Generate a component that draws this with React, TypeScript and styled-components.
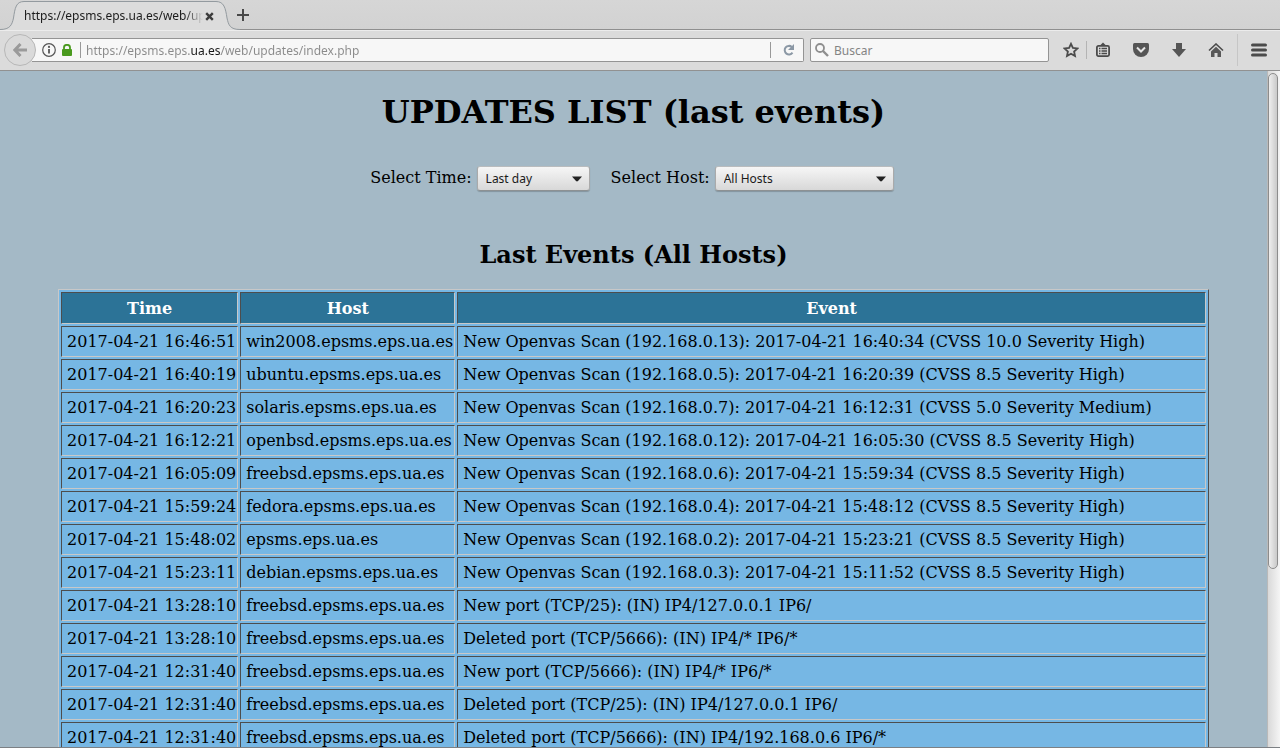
import React from "react";
import styled, { createGlobalStyle } from "styled-components";

const GlobalStyle = createGlobalStyle`
  * { box-sizing: border-box; }
  body { margin: 0; background: #a4b9c6; }
`;

const uiFont = `"Noto Sans", sans-serif`;
const pageFont = `"DejaVu Serif", serif`;

const BrowserWindow = styled.div`
  display: flex;
  flex-direction: column;
  height: 100vh;
  overflow: hidden;
  border-bottom: 1px solid #7c8084;
`;

const TabBar = styled.div`
  display: flex;
  flex: none;
  height: 30px;
  background: linear-gradient(#d6d6d6, #d2d2d2);
  box-shadow: inset 0 -1px #8f8f8f;
`;

const Tab = styled.div`
  display: flex;
  width: 240px;
  margin-right: -3px;
`;

const TabEdge = styled.svg`
  flex: none;
  width: 24px;
  height: 30px;
`;

const TabBody = styled.div`
  display: flex;
  flex: 1;
  align-items: center;
  min-width: 0;
  margin-top: 1px;
  border-top: 1px solid #939a9f;
  background: #dcdcdc;
`;

const TabTitle = styled.span`
  flex: 1;
  overflow: hidden;
  white-space: nowrap;
  font: 12px/16px ${uiFont};
  color: #1c1c1c;
  mask-image: linear-gradient(to left, transparent, #000 18px);
`;

const PlainButton = styled.button<{ $width: number }>`
  display: flex;
  flex: none;
  align-items: center;
  justify-content: center;
  width: ${(p) => p.$width}px;
  padding: 0;
  border: 0;
  background: none;
  color: #4b4b4b;
`;

const Toolbar = styled.div`
  display: flex;
  flex: none;
  align-items: center;
  height: 41px;
  padding: 0 0 1px 4px;
  border-top: 1px solid #ececec;
  border-bottom: 1px solid #919191;
  background: #dbdbdb;
`;

const BackButton = styled.button`
  display: flex;
  flex: none;
  align-items: center;
  justify-content: center;
  width: 32px;
  height: 32px;
  margin-right: -4px;
  padding: 0;
  border: 1px solid #b7b7b7;
  border-radius: 50%;
  background: #dadada;
  z-index: 1;
`;

const Field = styled.div<{ $address?: boolean }>`
  display: flex;
  flex: ${(p) => (p.$address ? "1" : "0 0 239px")};
  align-items: center;
  gap: ${(p) => (p.$address ? "4px" : "5px")};
  height: 24px;
  margin-left: ${(p) => (p.$address ? "0" : "6px")};
  padding-left: ${(p) => (p.$address ? "8px" : "4px")};
  border: 1px solid #949494;
  border-left-width: ${(p) => (p.$address ? "0" : "1px")};
  border-radius: ${(p) => (p.$address ? "0 2px 2px 0" : "2px")};
  background: #f7f7f7;
`;

const FieldInput = styled.input`
  flex: 1;
  min-width: 0;
  height: 20px;
  padding: 0;
  border: 0;
  outline: 0;
  background: transparent;
  font: 12px/16px ${uiFont};
  color: #8a8a8a;
  &::placeholder { color: #848484; opacity: 1; }
`;

const AddressInput = styled(FieldInput)`
  background: linear-gradient(to right, #8a8a8a 104px, #161616 104px, #161616 135px, #8a8a8a 135px);
  background-clip: text;
  -webkit-background-clip: text;
  -webkit-text-fill-color: transparent;
`;

const Divider = styled.span<{ $height: number; $color: string; $spaced?: boolean }>`
  flex: none;
  width: 1px;
  height: ${(p) => p.$height}px;
  margin: ${(p) => (p.$spaced ? "0 1px 0 4px" : "0")};
  background: ${(p) => p.$color};
`;

const Tools = styled.div`
  display: flex;
  flex: none;
  align-items: center;
  margin-left: 7px;
`;

const Viewport = styled.div`
  display: flex;
  flex: 1;
  min-height: 0;
`;

const Page = styled.main`
  flex: 1;
  min-width: 0;
  overflow-y: auto;
  scrollbar-width: none;
  padding: 23px 8px 0;
  background: #a4b9c6;
  font: 16px/19px ${pageFont};
  color: #000;
`;

const Title = styled.h1`
  margin: 0;
  font-size: 32px;
  line-height: 37px;
  text-align: center;
`;

const Subtitle = styled.h2`
  margin: 50px 0 20px;
  font-size: 24px;
  line-height: 28px;
  text-align: center;
`;

const Filters = styled.form`
  display: flex;
  justify-content: center;
  gap: 21px;
  margin-top: 35px;
  padding-right: 3px;
`;

const Filter = styled.label`
  display: flex;
  align-items: center;
  gap: 5px;
`;

const FilterName = styled.span`
  padding-bottom: 2px;
`;

const SelectBox = styled.span<{ $width: number }>`
  display: grid;
  align-items: center;
  width: ${(p) => p.$width}px;
  & > * { grid-area: 1 / 1; }
  & > svg { justify-self: end; margin-right: 8px; pointer-events: none; }
`;

const Select = styled.select`
  appearance: none;
  width: 100%;
  height: 25px;
  padding: 0 8px;
  border: 1px solid #aaa;
  border-top-color: #b9bcbe;
  border-bottom-color: #8d9193;
  border-radius: 3px;
  background: linear-gradient(#f6f6f6, #d8d8d8);
  box-shadow: 0 1px 1px rgba(0, 0, 0, 0.2);
  font: 12px/16px ${uiFont};
  color: #1a1a1a;
`;

const EventTable = styled.table`
  width: 92%;
  margin: 0 auto;
  border: 1px solid;
  border-color: #c8c8c8 #4d4d4d #4d4d4d #c8c8c8;
  border-collapse: separate;
  border-spacing: 2px;
  background: #76b7e4;
`;

const cellBorder = `
  border: 1px solid;
  border-color: #4d4d4d #c8c8c8 #c8c8c8 #4d4d4d;
  white-space: nowrap;
`;

const HeadCell = styled.th<{ $fill?: boolean }>`
  ${cellBorder}
  width: ${(p) => (p.$fill ? "100%" : "auto")};
  padding: 6px 5px 5px;
  background: #2c7397;
  color: #fff;
`;

const Cell = styled.td`
  ${cellBorder}
  padding: 5px 1px 5px 5px;
`;

const ScrollTrack = styled.div`
  flex: none;
  width: 13px;
  padding: 2px 2px 0 0;
  border-left: 1px solid #b9b9b9;
  background: linear-gradient(to right, #d9d9d9, #f5f5f5);
`;

const ScrollThumb = styled.div`
  height: 73.6%;
  border: 1px solid #8c8c8c;
  border-radius: 5px;
  background: linear-gradient(to right, #eee, #c9c9c9);
`;

type Row = [time: string, host: string, event: string];

const scan = (ip: string, at: string, cvss: string) =>
  `New Openvas Scan (192.168.0.${ip}): 2017-04-21 ${at} (CVSS ${cvss})`;

const rows: Row[] = [
  ["16:46:51", "win2008.", scan("13", "16:40:34", "10.0 Severity High")],
  ["16:40:19", "ubuntu.", scan("5", "16:20:39", "8.5 Severity High")],
  ["16:20:23", "solaris.", scan("7", "16:12:31", "5.0 Severity Medium")],
  ["16:12:21", "openbsd.", scan("12", "16:05:30", "8.5 Severity High")],
  ["16:05:09", "freebsd.", scan("6", "15:59:34", "8.5 Severity High")],
  ["15:59:24", "fedora.", scan("4", "15:48:12", "8.5 Severity High")],
  ["15:48:02", "", scan("2", "15:23:21", "8.5 Severity High")],
  ["15:23:11", "debian.", scan("3", "15:11:52", "8.5 Severity High")],
  ["13:28:10", "freebsd.", "New port (TCP/25): (IN) IP4/127.0.0.1 IP6/"],
  ["13:28:10", "freebsd.", "Deleted port (TCP/5666): (IN) IP4/* IP6/*"],
  ["12:31:40", "freebsd.", "New port (TCP/5666): (IN) IP4/* IP6/*"],
  ["12:31:40", "freebsd.", "Deleted port (TCP/25): (IN) IP4/127.0.0.1 IP6/"],
  ["12:31:40", "freebsd.", "Deleted port (TCP/5666): (IN) IP4/192.168.0.6 IP6/*"],
];

const Arrow = () => (
  <svg width="10" height="6" viewBox="0 0 10 6" aria-hidden="true">
    <path d="M0 .5h10L6 5q-1 .8-2 0z" fill="#222" />
  </svg>
);

function Tabs() {
  return (
    <TabBar>
      <Tab>
        <TabEdge viewBox="0 0 24 30" aria-hidden="true">
          <path d="M0 29.500C10 29.500 12 25 13.500 18C15 8 16 1.500 24 1.500V30H0z" fill="#dcdcdc" />
          <path d="M0 29.500C10 29.500 12 25 13.500 18C15 8 16 1.500 24 1.500" fill="none" stroke="#939a9f" />
        </TabEdge>
        <TabBody>
          <TabTitle>https://epsms.eps.ua.es/web/up</TabTitle>
          <PlainButton $width={13} aria-label="Close tab">
            <svg width="9" height="9" viewBox="0 0 9 9">
              <path d="M1.200 1.200l6.600 6.600M7.800 1.200L1.200 7.800" stroke="#3c3c3c" strokeWidth="2.400" />
            </svg>
          </PlainButton>
        </TabBody>
        <TabEdge viewBox="0 0 24 30" aria-hidden="true">
          <path d="M0 1.500C8 1.500 9.500 8 11 18C12.500 25 14 29.500 24 29.500V30H0z" fill="#dcdcdc" />
          <path d="M0 1.500C8 1.500 9.500 8 11 18C12.500 25 14 29.500 24 29.500" fill="none" stroke="#939a9f" />
        </TabEdge>
      </Tab>
      <PlainButton $width={12} aria-label="New tab">
        <svg width="12" height="12" viewBox="0 0 12 12">
          <path d="M6 0v12M0 6h12" stroke="#484848" strokeWidth="2" />
        </svg>
      </PlainButton>
    </TabBar>
  );
}

function NavigationBar() {
  return (
    <Toolbar>
      <BackButton aria-label="Back">
        <svg width="14" height="14" viewBox="0 0 14 14">
          <path d="M7.500 1L1.800 7l5.700 6M2 7h12" fill="none" stroke="#9a9a9a" strokeWidth="3" />
        </svg>
      </BackButton>
      <Field $address>
        <PlainButton $width={18} aria-label="Site information">
          <svg width="14" height="14" viewBox="0 0 14 14">
            <circle cx="7" cy="7" r="6.300" fill="none" stroke="#555" strokeWidth="1.200" />
            <path d="M7 6v4.600" stroke="#555" strokeWidth="1.800" />
            <circle cx="7" cy="3.900" r="1.100" fill="#555" />
          </svg>
        </PlainButton>
        <svg width="10" height="12" viewBox="0 0 10 12" aria-hidden="true">
          <path d="M2 6V3.500a3 2.700 0 0 1 6 0V6" fill="none" stroke="#4a9a1e" strokeWidth="1.800" />
          <rect y="5" width="10" height="7" rx="1" fill="#4a9a1e" />
        </svg>
        <Divider $height={16} $color="#999" $spaced />
        <AddressInput aria-label="Address" defaultValue="https://epsms.eps.ua.es/web/updates/index.php" />
        <Divider $height={16} $color="#999" />
        <PlainButton $width={28} aria-label="Reload">
          <svg width="12" height="12" viewBox="0 0 12 12">
            <path d="M9.500 8.700A4.300 4.300 0 1 1 8.800 2.900" fill="none" stroke="#8b98a5" strokeWidth="2" />
            <path d="M11 0v6H5z" fill="#8b98a5" />
          </svg>
        </PlainButton>
      </Field>
      <Field>
        <svg width="14" height="14" viewBox="0 0 14 14" aria-hidden="true">
          <circle cx="5" cy="5" r="4" fill="none" stroke="#8e8e8e" strokeWidth="1.800" />
          <path d="M8 8l5 5" stroke="#8e8e8e" strokeWidth="2.400" />
        </svg>
        <FieldInput aria-label="Search" placeholder="Buscar" />
      </Field>
      <Tools>
        <PlainButton $width={30} aria-label="Bookmark this page">
          <svg width="16" height="16" viewBox="0 0 16 16">
            <path
              d="M8 1.800l1.900 4.100 4.500.5-3.300 3.100.9 4.500-4-2.300-4 2.300.9-4.500-3.300-3.100 4.500-.5z"
              fill="none"
              stroke="currentColor"
              strokeWidth="1.800"
            />
          </svg>
        </PlainButton>
        <Divider $height={18} $color="#b4b4b4" />
        <PlainButton $width={31} aria-label="Bookmarks">
          <svg width="14" height="16" viewBox="0 0 14 16">
            <path d="M4 3.500L7 .5l3 3z" fill="currentColor" />
            <rect x=".9" y="3.900" width="12.200" height="10.200" rx="1.500" fill="none" stroke="currentColor" strokeWidth="1.800" />
            <path d="M3 6.500h1.500M3 9h1.500M3 11.500h1.500M5.500 6.500H11M5.500 9H11M5.500 11.500H11" stroke="currentColor" strokeWidth="1.300" />
          </svg>
        </PlainButton>
        <PlainButton $width={45} aria-label="Save to Pocket">
          <svg width="16" height="14" viewBox="0 0 16 14">
            <path d="M1.500 0h13Q16 0 16 1.500V6A8 8 0 0 1 0 6V1.500Q0 0 1.500 0z" fill="#555" />
            <path d="M4 4.500l4 4 4-4" fill="none" stroke="#e6e6e6" strokeWidth="2" />
          </svg>
        </PlainButton>
        <PlainButton $width={31} aria-label="Downloads">
          <svg width="14" height="14" viewBox="0 0 14 14">
            <path d="M4 0h6v6h4l-7 8-7-8h4z" fill="#555" />
          </svg>
        </PlainButton>
        <PlainButton $width={43} aria-label="Home">
          <svg width="16" height="14" viewBox="0 0 16 14">
            <path d="M1 7.500L8 1l7 6.500" fill="none" stroke="currentColor" strokeWidth="1.600" />
            <path d="M3 8.400l5-4.700 5 4.700V14H9.500v-4h-3v4H3z" fill="#585858" />
          </svg>
        </PlainButton>
        <Divider $height={32} $color="#c6c6c6" />
        <PlainButton $width={42} aria-label="Menu">
          <svg width="16" height="14" viewBox="0 0 16 14">
            <path d="M1.500 2h13M1.500 7h13M1.500 12h13" stroke="currentColor" strokeWidth="3" strokeLinecap="round" />
          </svg>
        </PlainButton>
      </Tools>
    </Toolbar>
  );
}

export default function App() {
  return (
    <BrowserWindow>
      <GlobalStyle />
      <Tabs />
      <NavigationBar />
      <Viewport>
        <Page>
          <Title>UPDATES LIST (last events)</Title>
          <Filters>
            <Filter>
              <FilterName>Select Time:</FilterName>
              <SelectBox $width={113}>
                <Select><option>Last day</option></Select>
                <Arrow />
              </SelectBox>
            </Filter>
            <Filter>
              <FilterName>Select Host:</FilterName>
              <SelectBox $width={179}>
                <Select><option>All Hosts</option></Select>
                <Arrow />
              </SelectBox>
            </Filter>
          </Filters>
          <Subtitle>Last Events (All Hosts)</Subtitle>
          <EventTable>
            <thead>
              <tr>
                <HeadCell scope="col">Time</HeadCell>
                <HeadCell scope="col">Host</HeadCell>
                <HeadCell scope="col" $fill>Event</HeadCell>
              </tr>
            </thead>
            <tbody>
              {rows.map(([time, host, event], i) => (
                <tr key={i}>
                  <Cell>2017-04-21 {time}</Cell>
                  <Cell>{host}epsms.eps.ua.es</Cell>
                  <Cell>{event}</Cell>
                </tr>
              ))}
            </tbody>
          </EventTable>
        </Page>
        <ScrollTrack>
          <ScrollThumb />
        </ScrollTrack>
      </Viewport>
    </BrowserWindow>
  );
}
